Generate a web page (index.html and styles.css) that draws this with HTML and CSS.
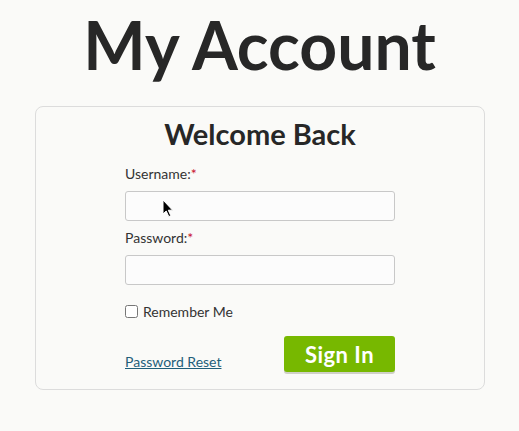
FILE: index.html
```html
<!DOCTYPE html>
<html lang="en">
<head>
    <meta charset='utf-8'>
    <title>My Account</title>
    <link rel="stylesheet" href="styles.css">
</head>
<body>

<h1 class="page-title">My Account</h1>

<div class="card">
    <h2 class="card-title">Welcome Back</h2>
    <form class="login">
        <label class="field-label" for="username">Username:<span class="req">*</span></label>
        <div class="field-wrap">
            <input id="username" class="field" type="text">
            <svg class="cursor" width="12" height="19" viewBox="0 0 12 19">
                <path d="M1 1 L1 15 L4.2 12 L6.8 17.6 L8.8 16.7 L6.3 11.2 L10.6 11.2 Z" fill="#000" stroke="#fff" stroke-width="1"/>
            </svg>
        </div>
        <label class="field-label" for="password">Password:<span class="req">*</span></label>
        <input id="password" class="field" type="password">
        <label class="remember"><input type="checkbox" class="check"> Remember Me</label>
        <div class="actions">
            <a href="#" class="reset">Password Reset</a>
            <button type="button" class="signin">Sign In</button>
        </div>
    </form>
</div>

</body>
</html>
```

FILE: styles.css
```css
body {
    margin: 0;
    background: #fafaf8;
    font-family: Lato, "Open Sans", sans-serif;
    color: #2b2b2b;
}

.page-title {
    margin: 0;
    padding-top: 7px;
    text-align: center;
    font-size: 66px;
    font-weight: 700;
    line-height: 76px;
    color: #272727;
}

.card {
    margin: 23px 34px 0 35px;
    border: 1px solid #dcdcdc;
    border-radius: 8px;
    padding: 9px 0 17px;
}

.card-title {
    margin: 0;
    text-align: center;
    font-size: 29px;
    font-weight: 700;
    line-height: 36px;
    color: #272727;
}

.login {
    width: 270px;
    margin: 13px auto 0;
    display: flex;
    flex-direction: column;
}

.field-label {
    font-size: 14px;
    line-height: 18px;
    color: #333;
}

.req {
    color: #c8102e;
}

.field-wrap {
    position: relative;
}

.field {
    box-sizing: border-box;
    width: 270px;
    height: 30px;
    margin: 8px 0 8px;
    border: 1px solid #c8c8c8;
    border-radius: 3px;
    background: #fcfcfc;
}

.cursor {
    position: absolute;
    left: 37px;
    top: 16px;
}

.remember {
    display: flex;
    align-items: center;
    gap: 5px;
    margin-top: 10px;
    font-size: 14px;
    color: #333;
}

.check {
    margin: 0;
    width: 13px;
    height: 13px;
}

.actions {
    display: flex;
    justify-content: space-between;
    align-items: flex-end;
    margin-top: 16px;
}

.reset {
    font-size: 14px;
    color: #1f5f7a;
    margin-bottom: 2px;
}

.signin {
    width: 111px;
    height: 36px;
    border: 0;
    border-radius: 3px;
    background: #77b800;
    color: #fff;
    font-family: Lato, sans-serif;
    font-weight: 700;
    font-size: 22px;
    letter-spacing: 0.5px;
    box-shadow: 0 2px 0 #d0d0c8;
    cursor: pointer;
}
```
